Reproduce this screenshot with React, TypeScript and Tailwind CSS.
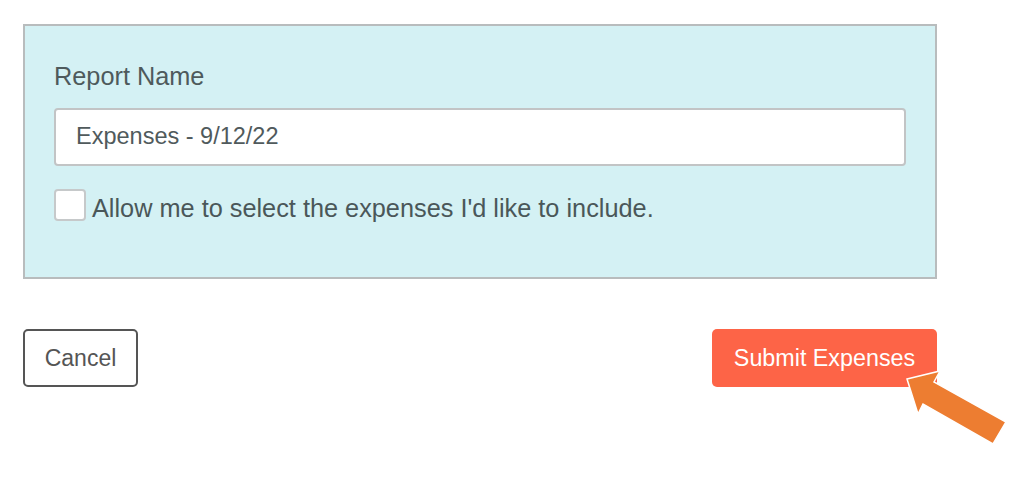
import React from "react";

export default function App() {
  return (
    <div
      className="relative w-[1019px] h-[478px] bg-white overflow-hidden"
      style={{ fontFamily: '"Liberation Sans", Arial, sans-serif' }}
    >
      <div className="pl-[23px] pt-[24px] w-[937px]">
        <div className="border-2 border-[#b8bcbd] bg-[#d4f1f4] pt-[36px] pb-[56px] px-[29px]">
          <div className="text-[25.3px] leading-[29px] text-[#4e5a5c]">Report Name</div>
          <div className="mt-[17px] h-[58px] bg-white border-2 border-[#c2c4c5] rounded-[4px] flex items-center pl-[20px] text-[23.5px] text-[#505a5c]">
            Expenses - 9/12/22
          </div>
          <label className="mt-[23px] flex items-center gap-[6px]">
            <span className="w-[32px] h-[32px] bg-white border-2 border-[#c6c9ca] rounded-[4px] shrink-0" />
            <span className="text-[25.3px] leading-[29px] text-[#4a5759] translate-y-[3px]">
              Allow me to select the expenses I'd like to include.
            </span>
          </label>
        </div>
        <div className="mt-[50px] flex justify-between">
          <button className="h-[58px] w-[115px] border-2 border-[#555555] rounded-[5px] bg-white text-[23px] text-[#555555]">
            Cancel
          </button>
          <button className="h-[58px] w-[225px] rounded-[5px] bg-[#fd6447] text-[23.3px] text-white">
            Submit Expenses
          </button>
        </div>
      </div>
      <svg
        className="absolute left-0 top-0 pointer-events-none"
        width="1019"
        height="478"
        viewBox="0 0 1019 478"
      >
        <polygon
          points="907,379 940,371 934,382 1006,422 993,444 923,404 918,414"
          fill="#ed7d31"
          stroke="#ffffff"
          strokeWidth="1.5"
          strokeLinejoin="miter"
        />
      </svg>
    </div>
  );
}
